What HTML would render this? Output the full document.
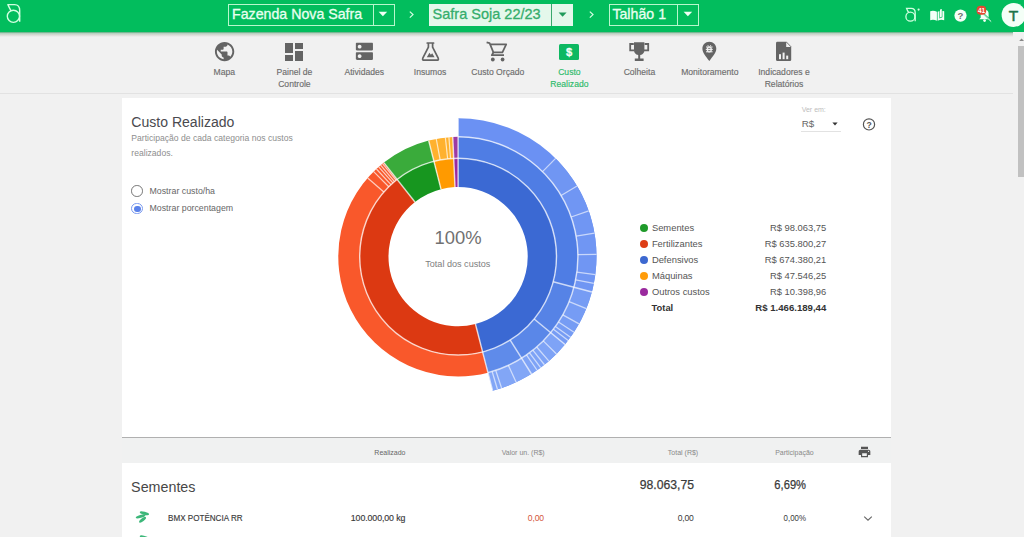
<!DOCTYPE html><html><head><meta charset="utf-8"><style>
html,body{margin:0;padding:0;}
body{width:1024px;height:537px;overflow:hidden;position:relative;background:#f1f1f1;font-family:"Liberation Sans",sans-serif;}
.t{position:absolute;line-height:1;white-space:nowrap;}
.abs{position:absolute;}
</style></head><body><div class="abs" style="left:0;top:0;width:1024px;height:32px;background:#02bd5d;"></div><div class="abs" style="left:0;top:32px;width:1024px;height:5px;background:linear-gradient(#5aa87c 0px,#b9d2c2 1.5px,#dcdad6 3px,#f1f1f1 5px);"></div><div class="abs" style="left:0;top:93px;width:1013px;height:1px;background:#e2e2e2;"></div><div class="abs" style="left:122px;top:98px;width:769px;height:339px;background:#fff;"></div><div class="abs" style="left:122px;top:437px;width:769px;height:1px;background:#b0b0b0;"></div><div class="abs" style="left:122px;top:438px;width:769px;height:25px;background:#f0f1f1;"></div><div class="abs" style="left:122px;top:463px;width:769px;height:74px;background:#fff;"></div><div class="abs" style="left:1013px;top:32px;width:11px;height:505px;background:#f1f1f1;"></div><div class="abs" style="left:1018px;top:46px;width:6px;height:131px;background:#c1c1c1;"></div><svg class="abs" style="left:1017px;top:36px" width="8" height="8"><path d="M2.2,5 L4.6,2.6 L7,5Z" fill="#888"/></svg><svg width="1024" height="537" style="position:absolute;left:0;top:0"><path d="M458.10,158.20A98.4,98.4 0 0 1 482.60,351.90L475.43,324.01A69.6,69.6 0 0 0 458.10,187.00Z" fill="#3b69d3"/><path d="M482.60,351.90A98.4,98.4 0 0 1 397.11,179.38L414.96,201.98A69.6,69.6 0 0 0 475.43,324.01Z" fill="#dc3912"/><path d="M397.11,179.38A98.4,98.4 0 0 1 433.92,161.22L440.99,189.13A69.6,69.6 0 0 0 414.96,201.98Z" fill="#17961f"/><path d="M433.92,161.22A98.4,98.4 0 0 1 453.72,158.30L455.00,187.07A69.6,69.6 0 0 0 440.99,189.13Z" fill="#ff9a00"/><path d="M453.72,158.30A98.4,98.4 0 0 1 458.10,158.20L458.10,187.00A69.6,69.6 0 0 0 455.00,187.07Z" fill="#9a2a9e"/><path d="M458.10,136.80A119.8,119.8 0 0 1 487.93,372.63L482.60,351.90A98.4,98.4 0 0 0 458.10,158.20Z" fill="#4f7de4"/><path d="M487.93,372.63A119.8,119.8 0 0 1 383.84,162.59L397.11,179.38A98.4,98.4 0 0 0 482.60,351.90Z" fill="#f9582b"/><path d="M383.84,162.59A119.8,119.8 0 0 1 428.66,140.47L433.92,161.22A98.4,98.4 0 0 0 397.11,179.38Z" fill="#3aab3b"/><path d="M428.66,140.47A119.8,119.8 0 0 1 452.76,136.92L453.72,158.30A98.4,98.4 0 0 0 433.92,161.22Z" fill="#ffb12e"/><path d="M452.76,136.92A119.8,119.8 0 0 1 458.10,136.80L458.10,158.20A98.4,98.4 0 0 0 453.72,158.30Z" fill="#9d3aa3"/><path d="M458.10,118.20A138.4,138.4 0 0 1 492.56,390.64L487.93,372.63A119.8,119.8 0 0 0 458.10,136.80Z" fill="#6b91f3"/><path d="M555.62,158.40A138.4,138.4 0 0 1 591.91,291.95L573.93,287.20A119.8,119.8 0 0 0 542.52,171.59Z" fill="#7096f3"/><path d="M591.91,291.95A138.4,138.4 0 0 1 565.05,344.45L550.67,332.64A119.8,119.8 0 0 0 573.93,287.20Z" fill="#769cf4"/><path d="M565.05,344.45A138.4,138.4 0 0 1 531.44,373.97L521.58,358.20A119.8,119.8 0 0 0 550.67,332.64Z" fill="#7ea3f6"/><path d="M531.44,373.97A138.4,138.4 0 0 1 492.56,390.64L487.93,372.63A119.8,119.8 0 0 0 521.58,358.20Z" fill="#82a6f6"/><path d="M573.93,287.20A119.8,119.8 0 0 1 550.67,332.64L534.14,319.06A98.4,98.4 0 0 0 553.24,281.74Z" fill="#5683e6"/><path d="M550.67,332.64A119.8,119.8 0 0 1 521.58,358.20L510.24,340.05A98.4,98.4 0 0 0 534.14,319.06Z" fill="#5a87e8"/><path d="M521.58,358.20A119.8,119.8 0 0 1 487.93,372.63L482.60,351.90A98.4,98.4 0 0 0 510.24,340.05Z" fill="#5f8bea"/><circle cx="458.1" cy="256.6" r="98.4" fill="none" stroke="#fff" stroke-width="1.45" stroke-opacity="0.7"/><path d="M458.10,136.80A119.8,119.8 0 0 1 487.93,372.63" fill="none" stroke="#fff" stroke-width="1.45" stroke-opacity="0.7"/><line x1="458.10" y1="187.00" x2="458.10" y2="136.80" stroke="#fff" stroke-width="1.45" stroke-opacity="0.7"/><line x1="475.43" y1="324.01" x2="487.93" y2="372.63" stroke="#fff" stroke-width="1.45" stroke-opacity="0.7"/><line x1="414.96" y1="201.98" x2="383.84" y2="162.59" stroke="#fff" stroke-width="1.45" stroke-opacity="0.7"/><line x1="440.99" y1="189.13" x2="428.66" y2="140.47" stroke="#fff" stroke-width="1.45" stroke-opacity="0.7"/><line x1="455.00" y1="187.07" x2="452.76" y2="136.92" stroke="#fff" stroke-width="1.45" stroke-opacity="0.7"/><line x1="458.10" y1="136.80" x2="458.10" y2="118.20" stroke="#fff" stroke-width="1.45" stroke-opacity="0.7"/><line x1="487.93" y1="372.63" x2="492.56" y2="390.64" stroke="#fff" stroke-width="1.45" stroke-opacity="0.7"/><line x1="553.24" y1="281.74" x2="591.91" y2="291.95" stroke="#fff" stroke-width="1.45" stroke-opacity="0.7"/><line x1="534.14" y1="319.06" x2="565.05" y2="344.45" stroke="#fff" stroke-width="1.45" stroke-opacity="0.7"/><line x1="510.24" y1="340.05" x2="531.44" y2="373.97" stroke="#fff" stroke-width="1.45" stroke-opacity="0.7"/><line x1="542.52" y1="171.59" x2="555.62" y2="158.40" stroke="#fff" stroke-width="1.25" stroke-opacity="0.62"/><line x1="561.11" y1="195.44" x2="577.10" y2="185.94" stroke="#fff" stroke-width="1.25" stroke-opacity="0.62"/><line x1="571.17" y1="217.00" x2="588.72" y2="210.86" stroke="#fff" stroke-width="1.25" stroke-opacity="0.62"/><line x1="576.15" y1="236.21" x2="594.48" y2="233.04" stroke="#fff" stroke-width="1.25" stroke-opacity="0.62"/><line x1="577.89" y1="254.72" x2="596.48" y2="254.43" stroke="#fff" stroke-width="1.25" stroke-opacity="0.62"/><line x1="576.88" y1="272.24" x2="595.32" y2="274.66" stroke="#fff" stroke-width="1.25" stroke-opacity="0.62"/><line x1="575.62" y1="279.87" x2="593.86" y2="283.48" stroke="#fff" stroke-width="1.25" stroke-opacity="0.62"/><line x1="569.10" y1="301.67" x2="586.33" y2="308.67" stroke="#fff" stroke-width="1.25" stroke-opacity="0.62"/><line x1="562.78" y1="314.86" x2="579.03" y2="323.91" stroke="#fff" stroke-width="1.25" stroke-opacity="0.62"/><line x1="558.46" y1="322.02" x2="574.04" y2="332.18" stroke="#fff" stroke-width="1.25" stroke-opacity="0.62"/><line x1="555.39" y1="326.51" x2="570.49" y2="337.36" stroke="#fff" stroke-width="1.25" stroke-opacity="0.62"/><line x1="553.40" y1="329.20" x2="568.19" y2="340.47" stroke="#fff" stroke-width="1.25" stroke-opacity="0.62"/><line x1="543.25" y1="340.87" x2="556.47" y2="353.95" stroke="#fff" stroke-width="1.25" stroke-opacity="0.62"/><line x1="536.70" y1="347.01" x2="548.90" y2="361.05" stroke="#fff" stroke-width="1.25" stroke-opacity="0.62"/><line x1="532.84" y1="350.23" x2="544.44" y2="364.76" stroke="#fff" stroke-width="1.25" stroke-opacity="0.62"/><line x1="529.53" y1="352.78" x2="540.62" y2="367.71" stroke="#fff" stroke-width="1.25" stroke-opacity="0.62"/><line x1="526.47" y1="354.97" x2="537.09" y2="370.25" stroke="#fff" stroke-width="1.25" stroke-opacity="0.62"/><line x1="508.35" y1="365.35" x2="516.15" y2="382.24" stroke="#fff" stroke-width="1.25" stroke-opacity="0.62"/><line x1="495.72" y1="370.34" x2="501.56" y2="388.00" stroke="#fff" stroke-width="1.25" stroke-opacity="0.62"/><line x1="492.13" y1="371.47" x2="497.41" y2="389.30" stroke="#fff" stroke-width="1.25" stroke-opacity="0.62"/><line x1="383.84" y1="192.04" x2="367.69" y2="178.00" stroke="#fff" stroke-width="1.2" stroke-opacity="0.7"/><line x1="388.76" y1="186.78" x2="373.68" y2="171.59" stroke="#fff" stroke-width="1.2" stroke-opacity="0.7"/><line x1="390.99" y1="184.63" x2="376.40" y2="168.98" stroke="#fff" stroke-width="1.2" stroke-opacity="0.7"/><line x1="392.90" y1="182.90" x2="378.72" y2="166.88" stroke="#fff" stroke-width="1.2" stroke-opacity="0.7"/><line x1="394.46" y1="181.55" x2="380.61" y2="165.23" stroke="#fff" stroke-width="1.2" stroke-opacity="0.7"/><line x1="396.04" y1="180.24" x2="382.55" y2="163.63" stroke="#fff" stroke-width="1.2" stroke-opacity="0.7"/><line x1="440.17" y1="159.85" x2="436.27" y2="138.81" stroke="#fff" stroke-width="1.2" stroke-opacity="0.7"/><line x1="447.64" y1="158.76" x2="445.37" y2="137.48" stroke="#fff" stroke-width="1.2" stroke-opacity="0.7"/><line x1="450.55" y1="158.49" x2="448.91" y2="137.15" stroke="#fff" stroke-width="1.2" stroke-opacity="0.7"/></svg><svg class="abs" style="left:0;top:0" width="40" height="32">
<circle cx="13.4" cy="16.3" r="6.1" fill="none" stroke="#d2ffe0" stroke-width="1.4"/>
<path d="M10.9,10.6 Q9.2,7.5 7.9,4.6 L14.6,4.6 C17.9,4.6 19.7,7.2 19.7,10.6 L19.7,21.8" fill="none" stroke="#d2ffe0" stroke-width="1.4" stroke-linejoin="round"/>
</svg><div class="abs" style="left:228px;top:4.3px;width:165px;height:19.5px;border:1px solid #b8f7cc;box-sizing:content-box;"></div><div class="abs" style="left:372.5px;top:4.3px;width:1px;height:21.5px;background:#b8f7cc;"></div><div class="t" style="top:7.08px;font-size:14.2px;color:#e9fff0;font-weight:400;left:232.00px;-webkit-text-stroke:0.3px #e9fff0;">Fazenda Nova Safra</div><svg class="abs" style="left:378px;top:11px" width="10" height="6"><path d="M0.6,0.8 L9.2,0.8 L4.9,5.3Z" fill="#f0fff4"/></svg><svg class="abs" style="left:407px;top:9px" width="10" height="12"><path d="M2.8,2.6 L6,5.6 L2.8,8.6" fill="none" stroke="#d8ffe4" stroke-width="1.2"/></svg><div class="abs" style="left:428.7px;top:3.9px;width:144.7px;height:21.9px;background:#e4f8eb;"></div><div class="abs" style="left:551.3px;top:3.9px;width:0.9px;height:21.9px;background:#3aa86c;"></div><div class="t" style="top:6.83px;font-size:14.5px;color:#34ad6b;font-weight:400;left:432.60px;-webkit-text-stroke:0.3px #34ad6b;">Safra Soja 22/23</div><svg class="abs" style="left:557.5px;top:11.5px" width="10" height="6"><path d="M0.6,0.6 L8.6,0.6 L4.6,4.8Z" fill="#1f9a5a"/></svg><svg class="abs" style="left:587px;top:9px" width="10" height="12"><path d="M2.8,2.6 L6,5.6 L2.8,8.6" fill="none" stroke="#d8ffe4" stroke-width="1.2"/></svg><div class="abs" style="left:608.6px;top:4.3px;width:88.6px;height:19.5px;border:1px solid #b8f7cc;box-sizing:content-box;"></div><div class="abs" style="left:676.6px;top:4.3px;width:1px;height:21.5px;background:#b8f7cc;"></div><div class="t" style="top:7.08px;font-size:14.2px;color:#e9fff0;font-weight:400;left:612.40px;-webkit-text-stroke:0.3px #e9fff0;">Talhão 1</div><svg class="abs" style="left:682.5px;top:11px" width="10" height="6"><path d="M0.6,0.8 L9.2,0.8 L4.9,5.3Z" fill="#f0fff4"/></svg><svg class="abs" style="left:900px;top:0" width="124" height="32">
<circle cx="10.4" cy="16.7" r="4.5" fill="none" stroke="#d2ffe0" stroke-width="1.3"/>
<path d="M8.6,12.4 Q7.4,10.4 6.6,8.4 L11.2,8.4 C13.9,8.4 15.2,10.4 15.2,12.8 L15.2,21.2" fill="none" stroke="#d2ffe0" stroke-width="1.3"/>
<circle cx="18.6" cy="9.6" r="1.1" fill="#d2ffe0"/>
<path d="M30.2,11.2 Q33.6,10 36.9,11.8 L36.9,20.8 Q33.6,19.2 30.2,20.2Z" fill="#f4fff7"/>
<path d="M37.6,11.8 Q40.9,10 44.2,11.2 L44.2,20.2 Q40.9,19.2 37.6,20.8Z" fill="#f4fff7"/>
<path d="M39.4,9.6 L42.4,8.4 L42.4,17.2 L39.4,18.4Z" fill="#02bd5d"/>
<path d="M40,9.6 L41.8,9 L41.8,16.8 L40,17.6Z" fill="#f4fff7"/>
<circle cx="60.5" cy="15.6" r="6.1" fill="#f4fff7"/>
<text x="60.5" y="19.4" font-family="Liberation Sans" font-weight="700" font-size="9.6" fill="#707070" text-anchor="middle">?</text>
<path d="M79.2,19.2 L80.7,17.8 L80.7,13.8 Q80.7,10.2 84.6,9.6 Q88.6,10.2 88.6,13.8 L88.6,17.8 L90.1,19.2Z" fill="#f4fff7"/>
<circle cx="84.6" cy="20.6" r="1.4" fill="#f4fff7"/>
<path d="M78.4,9 L91.6,21.4" stroke="#03bb5b" stroke-width="1.6"/>
<path d="M79.2,10 L91.2,21.6" stroke="#f4fff7" stroke-width="1"/>
<rect x="76.6" y="5.8" width="9.6" height="9" rx="4" fill="#e4472f"/>
<text x="81.6" y="12.9" font-family="Liberation Sans" font-weight="700" font-size="6.5" fill="#fff" text-anchor="middle">41</text>
<circle cx="113.6" cy="14.9" r="12" fill="#f4fff7"/>
<text x="113.6" y="20.6" font-family="Liberation Sans" font-size="15.5" fill="#1c7448" stroke="#1c7448" stroke-width="0.5" text-anchor="middle">T</text>
</svg><svg class="abs" style="left:212.8px;top:39.9px" width="23.2" height="23.2" viewBox="0 0 24 24"><path fill="#646464" d="M12 2C6.48 2 2 6.48 2 12s4.48 10 10 10 10-4.48 10-10S17.52 2 12 2zm-1 17.93c-3.95-.49-7-3.85-7-7.93 0-.62.08-1.21.21-1.79L9 15v1c0 1.1.9 2 2 2v1.93zm6.9-2.54c-.26-.81-1-1.39-1.9-1.39h-1v-3c0-.55-.45-1-1-1H8v-2h2c.55 0 1-.45 1-1V7h2c1.1 0 2-.9 2-2v-.41c2.93 1.19 5 4.06 5 7.41 0 2.08-.8 3.97-2.1 5.39z"/></svg><svg class="abs" style="left:282.3px;top:40px" width="24" height="24" viewBox="0 0 24 24"><path fill="#646464" d="M3 13h8V3H3v10zm0 8h8v-6H3v6zm10 0h8V11h-8v10zm0-18v6h8V3h-8z"/></svg><svg class="abs" style="left:353.1px;top:40.2px" width="22.8" height="22.8" viewBox="0 0 24 24"><path fill="#646464" d="M20 13H4c-.55 0-1 .45-1 1v6c0 .55.45 1 1 1h16c.55 0 1-.45 1-1v-6c0-.55-.45-1-1-1zM7 19c-1.1 0-2-.9-2-2s.9-2 2-2 2 .9 2 2-.9 2-2 2zM20 3H4c-.55 0-1 .45-1 1v6c0 .55.45 1 1 1h16c.55 0 1-.45 1-1V4c0-.55-.45-1-1-1zM7 9c-1.1 0-2-.9-2-2s.9-2 2-2 2 .9 2 2-.9 2-2 2z"/></svg><svg class="abs" style="left:418px;top:40px" width="26" height="24">
<path d="M9.2,3 L15.6,3 M10.4,3.4 L10.4,7.2 L4.8,18.2 Q4,20.2 6.2,20.2 L18.8,20.2 Q21,20.2 20.2,18.2 L14.6,7.2 L14.6,3.4" fill="none" stroke="#646464" stroke-width="1.7" stroke-linejoin="round" stroke-linecap="round"/>
<path d="M8.8,17.2 L11.4,12.8 L12.9,14.8 L14.2,13.2 L16.6,17.2Z" fill="#646464"/>
</svg><svg class="abs" style="left:480px;top:36px" width="30" height="28">
<path d="M6.6,6.4 L9.6,7.2 L13.4,16.4 L22.4,16.4 L26.2,8.3 L10.6,8.3" fill="none" stroke="#646464" stroke-width="1.75" stroke-linejoin="round"/>
<path d="M13.4,16.4 L11.8,19.2 L24,19.2" fill="none" stroke="#646464" stroke-width="1.75" stroke-linejoin="round"/>
<circle cx="12.8" cy="23.5" r="1.9" fill="#646464"/><circle cx="22.6" cy="23.5" r="1.9" fill="#646464"/>
</svg><div class="abs" style="left:559.2px;top:43.9px;width:19.8px;height:16.1px;background:#0db861;border-radius:1.5px;"></div><div class="t" style="top:46.52px;font-size:11.2px;color:#f4fff8;font-weight:700;left:419.00px;width:300px;text-align:center;-webkit-text-stroke:0.3px #f4fff8;">$</div><svg class="abs" style="left:626px;top:39px" width="28" height="26">
<path d="M8,3.2 L18.4,3.2 L18.4,11 Q18.4,15.2 14.2,16 L14.2,19.6 L17.6,19.6 L17.6,22 L8.8,22 L8.8,19.6 L12.2,19.6 L12.2,16 Q8,15.2 8,11Z" fill="#646464"/>
<path d="M7.8,5 L4.2,5 L4.2,11.4 L8.4,11.4" fill="none" stroke="#646464" stroke-width="1.8"/>
<path d="M18.6,5 L22.2,5 L22.2,11.4 L18,11.4" fill="none" stroke="#646464" stroke-width="1.8"/>
</svg><svg class="abs" style="left:700px;top:40px" width="20" height="24">
<path d="M9.3,1.8 C13.3,1.8 16.3,4.9 16.3,8.8 C16.3,12.6 12.5,16.8 9.3,21.1 C6.1,16.8 2.4,12.6 2.4,8.8 C2.4,4.9 5.3,1.8 9.3,1.8Z" fill="#646464"/>
<ellipse cx="9.3" cy="9.6" rx="2.6" ry="3" fill="#f1f1f1"/>
<path d="M6,7 L12.6,7 M5.8,9.4 L12.8,9.4 M6,11.8 L12.6,11.8 M7.8,5.2 L8.6,6.4 M10.8,5.2 L10,6.4" stroke="#f1f1f1" stroke-width="1"/>
<path d="M8.2,8.4 L10.4,8.4 M8.2,10.6 L10.4,10.6" stroke="#646464" stroke-width="0.8"/>
</svg><svg class="abs" style="left:774px;top:40px" width="20" height="24">
<path d="M3.4,1.8 L12.6,1.8 L17.2,6.6 L17.2,19.8 Q17.2,21.1 15.9,21.1 L3.4,21.1 Q2,21.1 2,19.8 L2,3.2 Q2,1.8 3.4,1.8Z" fill="#646464"/>
<path d="M12.2,2.2 L16.8,7 L12.2,7Z" fill="#f1f1f1"/>
<rect x="5" y="14.2" width="2" height="5" fill="#f1f1f1"/>
<rect x="8.6" y="12.6" width="2" height="6.6" fill="#f1f1f1"/>
<rect x="12.2" y="15.6" width="2" height="3.6" fill="#f1f1f1"/>
</svg><div class="t" style="top:68.32px;font-size:8.6px;color:#6e6e6e;font-weight:400;left:74.30px;width:300px;text-align:center;-webkit-text-stroke:0.15px #6e6e6e;">Mapa</div><div class="t" style="top:68.32px;font-size:8.6px;color:#6e6e6e;font-weight:400;left:144.40px;width:300px;text-align:center;-webkit-text-stroke:0.15px #6e6e6e;">Painel de</div><div class="t" style="top:79.62px;font-size:8.6px;color:#6e6e6e;font-weight:400;left:144.40px;width:300px;text-align:center;-webkit-text-stroke:0.15px #6e6e6e;">Controle</div><div class="t" style="top:68.32px;font-size:8.6px;color:#6e6e6e;font-weight:400;left:214.30px;width:300px;text-align:center;-webkit-text-stroke:0.15px #6e6e6e;">Atividades</div><div class="t" style="top:68.32px;font-size:8.6px;color:#6e6e6e;font-weight:400;left:280.10px;width:300px;text-align:center;-webkit-text-stroke:0.15px #6e6e6e;">Insumos</div><div class="t" style="top:68.32px;font-size:8.6px;color:#6e6e6e;font-weight:400;left:347.80px;width:300px;text-align:center;-webkit-text-stroke:0.15px #6e6e6e;">Custo Orçado</div><div class="t" style="top:68.32px;font-size:8.6px;color:#2dbb6a;font-weight:400;left:419.40px;width:300px;text-align:center;-webkit-text-stroke:0.15px #2dbb6a;">Custo</div><div class="t" style="top:79.62px;font-size:8.6px;color:#2dbb6a;font-weight:400;left:419.40px;width:300px;text-align:center;-webkit-text-stroke:0.15px #2dbb6a;">Realizado</div><div class="t" style="top:68.32px;font-size:8.6px;color:#6e6e6e;font-weight:400;left:489.40px;width:300px;text-align:center;-webkit-text-stroke:0.15px #6e6e6e;">Colheita</div><div class="t" style="top:68.32px;font-size:8.6px;color:#6e6e6e;font-weight:400;left:559.80px;width:300px;text-align:center;-webkit-text-stroke:0.15px #6e6e6e;">Monitoramento</div><div class="t" style="top:68.32px;font-size:8.6px;color:#6e6e6e;font-weight:400;left:634.00px;width:300px;text-align:center;-webkit-text-stroke:0.15px #6e6e6e;">Indicadores e</div><div class="t" style="top:79.62px;font-size:8.6px;color:#6e6e6e;font-weight:400;left:634.00px;width:300px;text-align:center;-webkit-text-stroke:0.15px #6e6e6e;">Relatórios</div><div class="t" style="top:115.41px;font-size:14.05px;color:#4a4a4f;font-weight:400;left:131.30px;">Custo Realizado</div><div class="t" style="top:133.52px;font-size:8.6px;color:#8e8e8e;font-weight:400;left:131.30px;">Participação de cada categoria nos custos</div><div class="t" style="top:148.52px;font-size:8.6px;color:#8e8e8e;font-weight:400;left:131.30px;">realizados.</div><div class="abs" style="left:131.4px;top:185.4px;width:9.6px;height:9.6px;border:1.2px solid #777;border-radius:50%;"></div><div class="abs" style="left:131.4px;top:202.8px;width:9.6px;height:9.6px;border:1.2px solid #7a9af0;border-radius:50%;"></div><div class="abs" style="left:134.1px;top:205.5px;width:6.6px;height:6.6px;background:#5b82ea;border-radius:50%;"></div><div class="t" style="top:186.95px;font-size:8.8px;color:#666;font-weight:400;left:149.50px;">Mostrar custo/ha</div><div class="t" style="top:204.35px;font-size:8.8px;color:#666;font-weight:400;left:149.50px;">Mostrar porcentagem</div><div class="t" style="top:106.27px;font-size:7px;color:#bdbdbd;font-weight:400;left:801.70px;">Ver em:</div><div class="t" style="top:118.90px;font-size:9.8px;color:#666;font-weight:400;left:801.70px;">R$</div><svg class="abs" style="left:831.5px;top:121.6px" width="8" height="5"><path d="M0.4,0.6 L5.6,0.6 L3,3.4Z" fill="#333"/></svg><div class="abs" style="left:801px;top:131px;width:40px;height:1px;background:#e2e2e2;"></div><svg class="abs" style="left:861px;top:116px" width="16" height="16"><circle cx="8" cy="8.4" r="5.6" fill="none" stroke="#555" stroke-width="1.2"/><text x="8" y="11.6" font-family="Liberation Sans" font-weight="700" font-size="8.6" fill="#555" text-anchor="middle">?</text></svg><div class="t" style="top:228.82px;font-size:18.4px;color:#717171;font-weight:400;left:308.10px;width:300px;text-align:center;">100%</div><div class="t" style="top:260.40px;font-size:9.1px;color:#7e7e7e;font-weight:400;left:307.80px;width:300px;text-align:center;">Total dos custos</div><div class="abs" style="left:640.3px;top:224.0px;width:8px;height:8px;border-radius:50%;background:#1f9a2a;"></div><div class="t" style="top:222.74px;font-size:9.4px;color:#555;font-weight:400;left:651.90px;">Sementes</div><div class="t" style="top:222.74px;font-size:9.4px;color:#555;font-weight:400;left:426.30px;width:400px;text-align:right;">R$ 98.063,75</div><div class="abs" style="left:640.3px;top:240.1px;width:8px;height:8px;border-radius:50%;background:#dd3d16;"></div><div class="t" style="top:238.79px;font-size:9.4px;color:#555;font-weight:400;left:651.90px;">Fertilizantes</div><div class="t" style="top:238.79px;font-size:9.4px;color:#555;font-weight:400;left:426.30px;width:400px;text-align:right;">R$ 635.800,27</div><div class="abs" style="left:640.3px;top:256.1px;width:8px;height:8px;border-radius:50%;background:#3c68d0;"></div><div class="t" style="top:254.84px;font-size:9.4px;color:#555;font-weight:400;left:651.90px;">Defensivos</div><div class="t" style="top:254.84px;font-size:9.4px;color:#555;font-weight:400;left:426.30px;width:400px;text-align:right;">R$ 674.380,21</div><div class="abs" style="left:640.3px;top:272.2px;width:8px;height:8px;border-radius:50%;background:#ff9c0a;"></div><div class="t" style="top:270.89px;font-size:9.4px;color:#555;font-weight:400;left:651.90px;">Máquinas</div><div class="t" style="top:270.89px;font-size:9.4px;color:#555;font-weight:400;left:426.30px;width:400px;text-align:right;">R$ 47.546,25</div><div class="abs" style="left:640.3px;top:288.2px;width:8px;height:8px;border-radius:50%;background:#9a2a9e;"></div><div class="t" style="top:286.94px;font-size:9.4px;color:#555;font-weight:400;left:651.90px;">Outros custos</div><div class="t" style="top:286.94px;font-size:9.4px;color:#555;font-weight:400;left:426.30px;width:400px;text-align:right;">R$ 10.398,96</div><div class="t" style="top:302.94px;font-size:9.4px;color:#333;font-weight:700;left:651.50px;">Total</div><div class="t" style="top:302.77px;font-size:9.6px;color:#333;font-weight:700;left:426.30px;width:400px;text-align:right;">R$ 1.466.189,44</div><div class="t" style="top:449.47px;font-size:7px;color:#666;font-weight:400;left:5.50px;width:400px;text-align:right;">Realizado</div><div class="t" style="top:449.47px;font-size:7px;color:#888;font-weight:400;left:144.70px;width:400px;text-align:right;">Valor un. (R$)</div><div class="t" style="top:449.47px;font-size:7px;color:#888;font-weight:400;left:298.20px;width:400px;text-align:right;">Total (R$)</div><div class="t" style="top:449.47px;font-size:7px;color:#888;font-weight:400;left:413.70px;width:400px;text-align:right;">Participação</div><svg class="abs" style="left:857px;top:445px" width="15" height="14" viewBox="0 0 24 24"><path fill="#555" d="M19 8H5c-1.66 0-3 1.34-3 3v6h4v4h12v-4h4v-6c0-1.66-1.34-3-3-3zm-3 11H8v-5h8v5zm3-7c-.55 0-1-.45-1-1s.45-1 1-1 1 .45 1 1-.45 1-1 1zm-1-9H6v4h12V3z"/></svg><div class="t" style="top:480.30px;font-size:14.3px;color:#474747;font-weight:400;left:131.10px;">Sementes</div><div class="t" style="top:479.10px;font-size:12.4px;color:#3a3a3a;font-weight:400;transform:scaleX(0.985);transform-origin:100% 0;left:293.70px;width:400px;text-align:right;-webkit-text-stroke:0.25px #3a3a3a;">98.063,75</div><div class="t" style="top:479.10px;font-size:12.4px;color:#3a3a3a;font-weight:400;transform:scaleX(0.9);transform-origin:100% 0;left:405.60px;width:400px;text-align:right;-webkit-text-stroke:0.25px #3a3a3a;">6,69%</div><svg class="abs" style="left:128px;top:505px" width="30" height="32"><ellipse cx="16.4" cy="8.2" rx="4.8" ry="1.5" transform="rotate(16 16.4 8.2)" fill="#3db77a"/><ellipse cx="12.6" cy="11.4" rx="5" ry="1.5" transform="rotate(-16 12.6 11.4)" fill="#3db77a"/><ellipse cx="14.6" cy="14.8" rx="4.2" ry="1.5" transform="rotate(-38 14.6 14.8)" fill="#3db77a"/></svg><div class="t" style="top:513.61px;font-size:9.2px;color:#3a3a3a;font-weight:400;transform:scaleX(0.88);transform-origin:0 0;left:168.30px;-webkit-text-stroke:0.15px #3a3a3a;">BMX POTÊNCIA RR</div><div class="t" style="top:513.95px;font-size:8.8px;color:#3a3a3a;font-weight:400;letter-spacing:-0.1px;left:5.30px;width:400px;text-align:right;-webkit-text-stroke:0.15px #3a3a3a;">100.000,00 kg</div><div class="t" style="top:514.12px;font-size:8.6px;color:#d4553a;font-weight:400;letter-spacing:-0.2px;left:143.80px;width:400px;text-align:right;">0,00</div><div class="t" style="top:514.12px;font-size:8.6px;color:#3a3a3a;font-weight:400;letter-spacing:-0.2px;left:293.70px;width:400px;text-align:right;">0,00</div><div class="t" style="top:514.12px;font-size:8.6px;color:#3a3a3a;font-weight:400;transform:scaleX(0.92);transform-origin:100% 0;left:406.00px;width:400px;text-align:right;">0,00%</div><svg class="abs" style="left:863px;top:515px" width="10" height="8"><path d="M1.2,1.6 L5,5.2 L8.8,1.6" fill="none" stroke="#666" stroke-width="1.1"/></svg><svg class="abs" style="left:128px;top:530px" width="30" height="8"><ellipse cx="16.4" cy="7.4" rx="4.8" ry="1.5" transform="rotate(16 16.4 7.4)" fill="#3db77a"/></svg></body></html>
